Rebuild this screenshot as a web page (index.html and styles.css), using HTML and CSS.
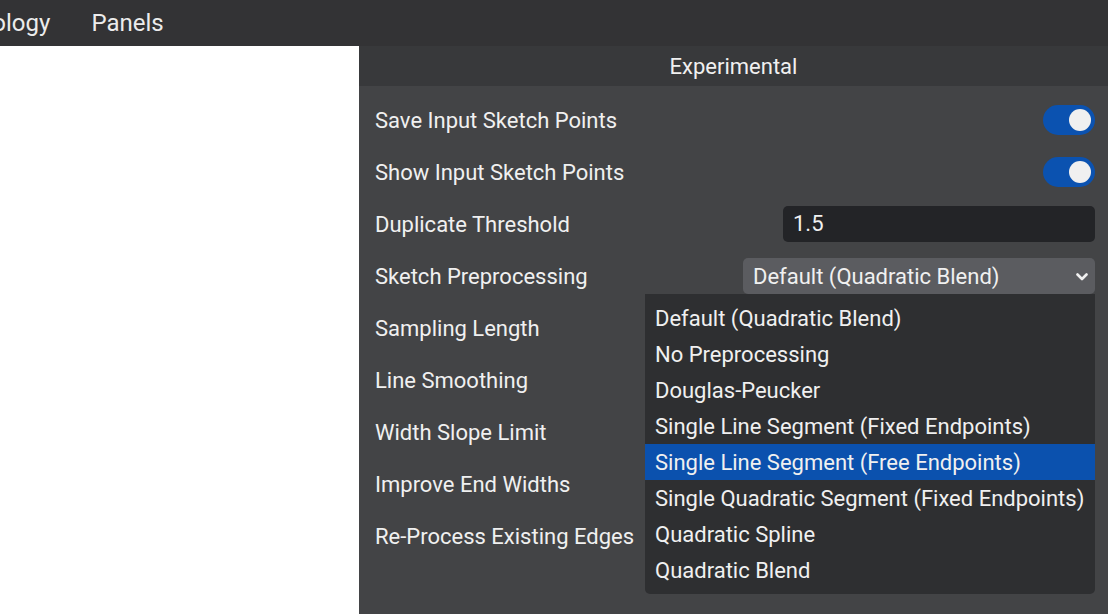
FILE: index.html
```html
<!DOCTYPE html>
<html>
<head>
<meta charset="utf-8">
<link rel="stylesheet" href="styles.css">
</head>
<body>
<div class="topbar">
  <div class="menu">
    <span class="menu-item">Topology</span>
    <span class="menu-item">Panels</span>
  </div>
</div>
<div class="main">
  <div class="canvas"></div>
  <div class="panel">
    <div class="panel-header">Experimental</div>
    <div class="panel-body">
      <div class="row">
        <span class="label">Save Input Sketch Points</span>
        <span class="toggle on"><span class="knob"></span></span>
      </div>
      <div class="row">
        <span class="label">Show Input Sketch Points</span>
        <span class="toggle on"><span class="knob"></span></span>
      </div>
      <div class="row">
        <span class="label">Duplicate Threshold</span>
        <div class="text-input">1.5</div>
      </div>
      <div class="row">
        <span class="label">Sketch Preprocessing</span>
        <div class="select-wrap">
          <div class="select">
            <span>Default (Quadratic Blend)</span>
            <svg class="chevron" width="12" height="8" viewBox="0 0 12 8"><polyline points="1.5,1.5 6,6 10.5,1.5" fill="none" stroke="#f0f0f0" stroke-width="2.6" stroke-linecap="round" stroke-linejoin="round"/></svg>
          </div>
          <ul class="dropdown">
            <li>Default (Quadratic Blend)</li>
            <li>No Preprocessing</li>
            <li>Douglas-Peucker</li>
            <li>Single Line Segment (Fixed Endpoints)</li>
            <li class="active">Single Line Segment (Free Endpoints)</li>
            <li>Single Quadratic Segment (Fixed Endpoints)</li>
            <li>Quadratic Spline</li>
            <li>Quadratic Blend</li>
          </ul>
        </div>
      </div>
      <div class="row"><span class="label">Sampling Length</span></div>
      <div class="row"><span class="label">Line Smoothing</span></div>
      <div class="row"><span class="label">Width Slope Limit</span></div>
      <div class="row"><span class="label">Improve End Widths</span></div>
      <div class="row"><span class="label">Re-Process Existing Edges</span></div>
    </div>
  </div>
</div>
</body>
</html>
```

FILE: styles.css
```css
html, body {
  margin: 0;
  padding: 0;
  height: 100%;
  overflow: hidden;
}
body {
  font-family: Roboto, "Noto Sans", sans-serif;
  color: #f0f0f0;
  background: #ffffff;
  display: flex;
  flex-direction: column;
}
.topbar {
  height: 46px;
  background: #333335;
  flex: none;
  display: flex;
  align-items: center;
  overflow: hidden;
}
.menu {
  display: flex;
  gap: 41px;
  margin-left: -48px;
  font-size: 24px;
  line-height: 46px;
  color: #ececec;
}
.main {
  flex: 1;
  display: flex;
  min-height: 0;
}
.canvas {
  width: 359px;
  flex: none;
  background: #ffffff;
}
.panel {
  flex: 1;
  background: #434446;
  display: flex;
  flex-direction: column;
}
.panel-header {
  height: 40px;
  background: #38393b;
  display: flex;
  align-items: center;
  justify-content: center;
  font-size: 22px;
}
.panel-body {
  padding: 16px 13px 0 16px;
  display: flex;
  flex-direction: column;
  gap: 16px;
}
.row {
  height: 36px;
  display: flex;
  align-items: center;
  justify-content: space-between;
}
.label {
  font-size: 22px;
  white-space: nowrap;
}
.toggle {
  width: 52px;
  height: 30px;
  border-radius: 15px;
  background: #0b52b0;
  display: flex;
  align-items: center;
  justify-content: flex-end;
  padding: 0 4px;
  box-sizing: border-box;
}
.knob {
  width: 22px;
  height: 22px;
  border-radius: 50%;
  background: #f0f0f0;
}
.text-input {
  width: 312px;
  height: 36px;
  box-sizing: border-box;
  background: #232427;
  border-radius: 5px;
  padding: 0 10px;
  font-size: 22px;
  line-height: 36px;
}
.select-wrap {
  position: relative;
}
.select {
  width: 352px;
  height: 36px;
  box-sizing: border-box;
  background: #5b5c60;
  border-radius: 5px;
  padding: 0 7px 0 10px;
  font-size: 22px;
  display: flex;
  align-items: center;
  justify-content: space-between;
}
.chevron {
  margin-top: 2px;
}
.dropdown {
  position: absolute;
  top: 36px;
  right: 0;
  width: 450px;
  margin: 0;
  padding: 6px 0;
  list-style: none;
  background: #2e2f31;
  border-radius: 0 0 5px 5px;
  z-index: 10;
}
.dropdown li {
  height: 36px;
  box-sizing: border-box;
  padding: 2px 10px 0 10px;
  line-height: 34px;
  font-size: 22px;
  white-space: nowrap;
}
.dropdown li.active {
  background: #0b51ae;
}
```
